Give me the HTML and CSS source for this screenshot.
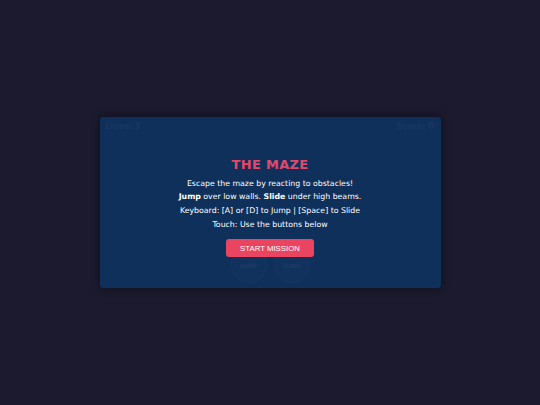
FILE: index.html
```html
<!DOCTYPE html>
<html lang="en">
<head>
<meta charset="utf-8">
<title>The Maze</title>
<link rel="stylesheet" href="styles.css">
</head>
<body>
  <div class="game">
    <div class="hud">
      <span>Lives: 3</span>
      <span>Score: 0</span>
    </div>
    <div class="stage"></div>
    <div class="controls">
      <button class="ctrl">JUMP</button>
      <button class="ctrl">SLIDE</button>
    </div>
    <div class="overlay">
      <h1 class="title">THE MAZE</h1>
      <p class="info">Escape the maze by reacting to obstacles!<br>
      <b>Jump</b> over low walls. <b>Slide</b> under high beams.<br>
      Keyboard: [A] or [D] to Jump | [Space] to Slide<br>
      Touch: Use the buttons below</p>
      <button class="start">START MISSION</button>
    </div>
  </div>
</body>
</html>
```

FILE: styles.css
```css
html, body {
  margin: 0;
  height: 100%;
}
body {
  background: #1b1a2e;
  display: flex;
  align-items: center;
  justify-content: center;
  font-family: "DejaVu Sans", Verdana, sans-serif;
}
.game {
  position: relative;
  width: 341px;
  height: 171px;
  background: #0f3460;
  border-radius: 4px;
  box-shadow: 0 0 8px rgba(0, 0, 0, 0.45);
  display: flex;
  flex-direction: column;
  overflow: hidden;
}
.hud {
  display: flex;
  justify-content: space-between;
  padding: 5px 7px 0 6px;
  font-size: 8px;
  font-weight: bold;
  color: #647fa8;
}
.stage {
  flex: 1;
}
.controls {
  display: flex;
  justify-content: center;
  gap: 7px;
  padding: 0 0 5px 0;
}
.ctrl {
  width: 36px;
  height: 36px;
  border-radius: 50%;
  border: 1px solid rgba(255, 255, 255, 0.18);
  background: rgba(255, 255, 255, 0.1);
  color: #8fa4c4;
  font-family: "DejaVu Sans", Verdana, sans-serif;
  font-size: 6px;
  font-weight: bold;
  padding: 0;
}
.overlay {
  position: absolute;
  inset: 0;
  background: rgba(16, 48, 90, 0.9);
  display: flex;
  flex-direction: column;
  align-items: center;
  justify-content: center;
  padding-top: 9px;
  box-sizing: border-box;
}
.title {
  margin: 0 0 5px 0;
  font-size: 13px;
  line-height: 15px;
  font-weight: bold;
  color: #e2486a;
  letter-spacing: 0.3px;
}
.info {
  margin: 0;
  color: #ffffff;
  font-size: 7.8px;
  line-height: 13.7px;
  text-align: center;
}
.start {
  margin-top: 8px;
  width: 88px;
  height: 18px;
  border: none;
  border-radius: 3px;
  background: #e94560;
  color: #ffffff;
  font-family: "Liberation Sans", Arial, sans-serif;
  font-size: 7.8px;
  padding: 0;
}
```
